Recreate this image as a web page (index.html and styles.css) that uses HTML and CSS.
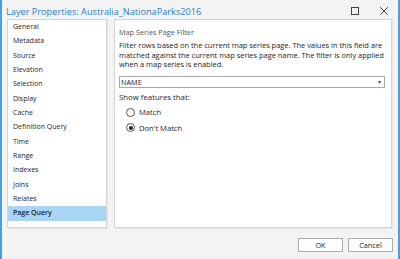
FILE: index.html
```html
<!DOCTYPE html>
<html>
<head>
<meta charset="utf-8">
<link rel="stylesheet" href="styles.css">
</head>
<body>
<div class="window">
  <div class="titlebar">
    <span class="title">Layer Properties: Australia_NationaParks2016</span>
    <div class="controls">
      <svg class="ctl" width="8" height="8" viewBox="0 0 8 8"><rect x="0.5" y="0.5" width="7" height="7" fill="none" stroke="#444" stroke-width="1"/></svg>
      <svg class="ctl" width="8" height="8" viewBox="0 0 8 8"><path d="M0.3 0.3 L7.7 7.7 M7.7 0.3 L0.3 7.7" stroke="#444" stroke-width="1"/></svg>
    </div>
  </div>
  <div class="main">
    <ul class="nav">
      <li>General</li>
      <li>Metadata</li>
      <li>Source</li>
      <li>Elevation</li>
      <li>Selection</li>
      <li>Display</li>
      <li>Cache</li>
      <li>Definition Query</li>
      <li>Time</li>
      <li>Range</li>
      <li>Indexes</li>
      <li>Joins</li>
      <li>Relates</li>
      <li class="active">Page Query</li>
    </ul>
    <div class="panel">
      <div class="heading">Map Series Page Filter</div>
      <p class="desc">Filter rows based on the current map series page. The values in this field are matched against the current map series page name. The filter is only applied when a map series is enabled.</p>
      <div class="select"><span>NAME</span><span class="caret">&#9662;</span></div>
      <div class="label">Show features that:</div>
      <div class="radios">
        <div class="radio"><span class="dot"></span>Match</div>
        <div class="radio checked"><span class="dot"></span>Don't Match</div>
      </div>
    </div>
  </div>
  <div class="footer">
    <button class="btn">OK</button>
    <button class="btn">Cancel</button>
  </div>
</div>
</body>
</html>
```
FILE: styles.css
```css
html, body {
  margin: 0;
  padding: 0;
  background: #f3f3f3;
}
.window {
  width: 400px;
  height: 259px;
  box-sizing: border-box;
  background: #f3f3f3;
  border-left: 2px solid #4a9fe0;
  border-right: 2px solid #4a9fe0;
  font-family: "Open Sans", "Noto Sans", sans-serif;
  color: #1e1e1e;
  display: flex;
  flex-direction: column;
}
.titlebar {
  height: 19px;
  display: flex;
  align-items: center;
  justify-content: space-between;
  padding: 0 10px 0 4px;
  flex-shrink: 0;
}
.title {
  font-size: 9.2px;
  color: #2a7fc4;
  padding-top: 4px;
}
.controls {
  display: flex;
  gap: 21px;
  align-items: center;
  padding-top: 3px;
}
.ctl {
  display: block;
}
.main {
  display: flex;
  gap: 7px;
  padding: 0 6px 0 5px;
  height: 209px;
  flex-shrink: 0;
}
.nav {
  list-style: none;
  margin: 0;
  padding: 0;
  width: 100px;
  box-sizing: border-box;
  background: #fff;
  border: 1px solid #d4d4d4;
  box-shadow: 1px 1px 0 #e6e6e6;
  flex-shrink: 0;
}
.nav li {
  font-size: 7px;
  height: 14.35px;
  line-height: 14.35px;
  padding-left: 5px;
  color: #1e1e1e;
}
.nav li.active {
  background: #a9d5f5;
  font-weight: 600;
}
.panel {
  flex: 1;
  background: #fff;
  border: 1px solid #d4d4d4;
  box-shadow: 1px 1px 0 #e6e6e6;
  padding: 6px 6px 0 4px;
  font-size: 7.5px;
}
.heading {
  color: #555;
  line-height: 12px;
  font-size: 7.3px;
}
.desc {
  margin: 3.4px 0 0;
  line-height: 9.3px;
  color: #1e1e1e;
  letter-spacing: -0.03px;
}
.select {
  margin-top: 6.4px;
  height: 12px;
  box-sizing: border-box;
  border: 1px solid #a9a9a9;
  display: flex;
  align-items: center;
  justify-content: space-between;
  padding: 0 3px 0 1px;
  color: #1e1e1e;
  font-size: 7.3px;
}
.caret {
  font-size: 5.5px;
  color: #444;
}
.label {
  margin-top: 3.8px;
  color: #1e1e1e;
  line-height: 12px;
  font-size: 7.8px;
}
.radios {
  padding-left: 7px;
  margin-top: 1px;
}
.radio {
  display: flex;
  align-items: center;
  gap: 4px;
  height: 15.5px;
  color: #1e1e1e;
  font-size: 7.6px;
}
.dot {
  width: 7px;
  height: 7px;
  border: 1px solid #555;
  border-radius: 50%;
  background: #fff;
  position: relative;
  box-sizing: content-box;
}
.radio.checked .dot::after {
  content: "";
  position: absolute;
  left: 1.5px;
  top: 1.5px;
  width: 4px;
  height: 4px;
  border-radius: 50%;
  background: #222;
}
.footer {
  display: flex;
  justify-content: flex-end;
  gap: 5px;
  padding: 10px 5px 0 0;
}
.btn {
  width: 45px;
  height: 14px;
  box-sizing: border-box;
  border: 1px solid #adadad;
  background: #fdfdfd;
  font-family: "Open Sans", "Noto Sans", sans-serif;
  font-size: 7.3px;
  color: #1e1e1e;
  padding: 0;
}
```
